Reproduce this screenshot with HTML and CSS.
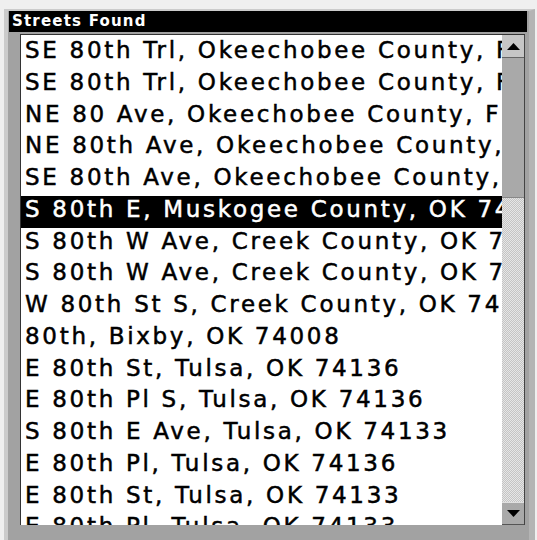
FILE: index.html
```html
<!DOCTYPE html>
<html lang="en">
<head>
  <meta charset="UTF-8">
  <meta name="viewport" content="width=device-width, initial-scale=1.0">
  <title>Streets Found</title>
  <link rel="stylesheet" href="styles.css">
</head>
<body>
  <div class="panel">
    <div class="title-bar">Streets Found</div>
    <div class="box">
      <ul class="street-list">
        <li>SE 80th Trl, Okeechobee County, FL 34974</li>
        <li>SE 80th Trl, Okeechobee County, FL 34972</li>
        <li>NE 80 Ave, Okeechobee County, FL 34972</li>
        <li>NE 80th Ave, Okeechobee County, FL 34972</li>
        <li>SE 80th Ave, Okeechobee County, FL 34974</li>
        <li class="selected">S 80th E, Muskogee County, OK 74403</li>
        <li>S 80th W Ave, Creek County, OK 74066</li>
        <li>S 80th W Ave, Creek County, OK 74131</li>
        <li>W 80th St S, Creek County, OK 74066</li>
        <li>80th, Bixby, OK 74008</li>
        <li>E 80th St, Tulsa, OK 74136</li>
        <li>E 80th Pl S, Tulsa, OK 74136</li>
        <li>S 80th E Ave, Tulsa, OK 74133</li>
        <li>E 80th Pl, Tulsa, OK 74136</li>
        <li>E 80th St, Tulsa, OK 74133</li>
        <li>E 80th Pl, Tulsa, OK 74133</li>
      </ul>
      <div class="scrollbar">
        <div class="scroll-btn up">
          <svg width="13" height="7" viewBox="0 0 13 7"><polygon points="0,7 6.5,0 13,7" fill="#000"/></svg>
        </div>
        <div class="thumb"></div>
        <div class="track"></div>
        <div class="scroll-btn down">
          <svg width="13" height="7" viewBox="0 0 13 7"><polygon points="0,0 13,0 6.5,7" fill="#000"/></svg>
        </div>
      </div>
    </div>
  </div>
</body>
</html>
```

FILE: styles.css
```css
body {
  margin: 0;
  background-color: #efefef;
  font-family: "DejaVu Sans", sans-serif;
}

.panel {
  margin: 9px 2px 0 4px;
  padding: 0 2px 15px 1px;
  background: #a2a2a2;
  border-top: 2px solid #cbcbcb;
  border-left: 4px solid #cbcbcb;
  border-right: 6px solid #b4b4b4;
}

.title-bar {
  height: 21px;
  line-height: 21px;
  background: #000;
  color: #fff;
  font-weight: bold;
  font-size: 15px;
  letter-spacing: 1.2px;
  padding-left: 3px;
}

.box {
  display: flex;
  height: 490px;
  margin: 2px 2px 0 11px;
  background: #fff;
  border-top: 1px solid #333;
  border-left: 1px solid #333;
}

.street-list {
  flex: 1;
  list-style: none;
  margin: 0;
  padding: 2px 0 0 0;
  overflow: hidden;
}

.street-list li {
  height: 31.75px;
  box-sizing: border-box;
  line-height: 27.75px;
  padding-left: 4px;
  font-size: 23px;
  letter-spacing: 2.7px;
  color: #000;
  -webkit-text-stroke: 0.5px currentColor;
  white-space: nowrap;
  overflow: hidden;
}

.street-list li.selected {
  background: #000;
  color: #fff;
}

.scrollbar {
  width: 22px;
  display: flex;
  flex-direction: column;
  border-right: 1px solid #444;
}

.scroll-btn {
  height: 23px;
  display: flex;
  align-items: center;
  justify-content: center;
  box-sizing: border-box;
}

.scroll-btn.up {
  background: #c6c6c6;
  border-bottom: 1px solid #666;
}

.scroll-btn.down {
  background: #a9a9a9;
  border-top: 1px solid #e0e0e0;
  border-bottom: 1px solid #555;
}

.thumb {
  height: 139px;
  background: #a9a9a9;
  border-bottom: 1px solid #888;
}

.track {
  flex: 1;
  background-color: #e2e2e2;
  background-image: repeating-conic-gradient(#c4c4c4 0 25%, #e6e6e6 0 50%);
  background-size: 2px 2px;
}
```
